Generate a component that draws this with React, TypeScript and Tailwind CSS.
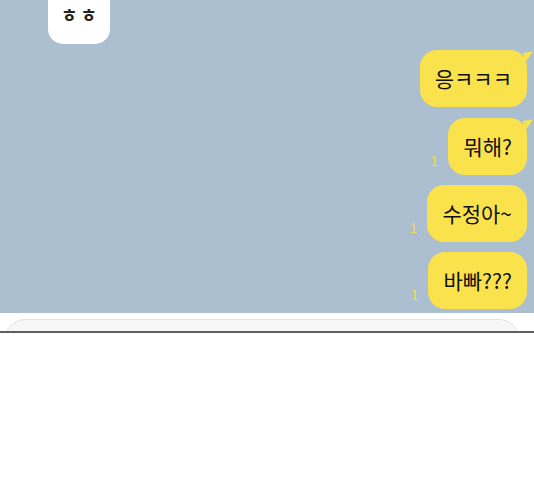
const font = { fontFamily: '"Noto Sans CJK KR", "Noto Sans", sans-serif' }

type Msg = { text: string; unread?: boolean; tail?: boolean; mt: string }

const messages: Msg[] = [
  { text: '응ㅋㅋㅋ', tail: true, mt: 'mt-[6px]' },
  { text: '뭐해?', unread: true, tail: true, mt: 'mt-[11px]' },
  { text: '수정아~', unread: true, mt: 'mt-[10px]' },
  { text: '바빠???', unread: true, mt: 'mt-[10px]' },
]

const Tail = () => (
  <svg
    className="absolute -right-[7px] top-[1px]"
    width="11"
    height="13"
    viewBox="0 0 11 13"
  >
    <path d="M0 2 L10 0.5 L2 12 Z" fill="#fae24c" />
  </svg>
)

export default function App() {
  return (
    <div className="w-[534px] h-[480px] bg-white" style={font}>
      <div className="h-[313px] bg-[#abbfd0] overflow-hidden">
        <div className="ml-[48px] w-[62px] h-[44px] bg-white rounded-b-[15px] flex justify-center pt-[3px]">
          <span className="text-[18px] font-bold text-[#222] tracking-[3px] leading-[22px] pl-[3px]">
            ㅎㅎ
          </span>
        </div>
        <div className="flex flex-col items-end pr-[7px]">
          {messages.map((m, i) => (
            <div key={i} className={`flex items-end gap-[10px] ${m.mt}`}>
              {m.unread && (
                <span
                  className="text-[14px] leading-none text-[#f3dc4d] mb-[7px]"
                  style={{ fontFamily: '"Liberation Sans", sans-serif' }}
                >
                  1
                </span>
              )}
              <div className="relative h-[57px] px-[15px] bg-[#fae24c] rounded-[17px] flex items-center">
                <span className="text-[21px] text-[#111] leading-none">{m.text}</span>
                {m.tail && <Tail />}
              </div>
            </div>
          ))}
        </div>
      </div>
      <div className="h-[20px] bg-white overflow-hidden pt-[6px] px-[5px] border-b-2 border-[#5f5f5f]">
        <div className="w-[514px] h-[40px] rounded-[20px] bg-[#f7f7f8] border border-[#e4e2e0]" />
      </div>
    </div>
  )
}
